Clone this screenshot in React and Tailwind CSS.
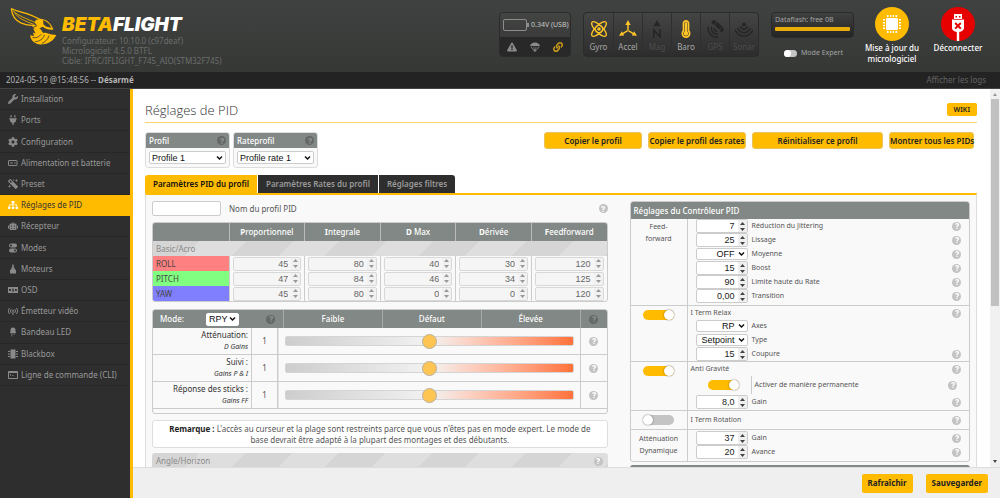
import clsx from 'clsx';
import {
  FaWrench,
  FaPlug,
  FaCog,
  FaMagic,
  FaSitemap,
  FaRobot,
  FaExclamationTriangle,
  FaLink,
  FaThermometerFull,
  FaQuestion,
} from 'react-icons/fa';

const svgProps = { viewBox: '0 0 20 20', fill: 'none', stroke: 'currentColor', strokeWidth: 2 };

const BatteryIcon = (props) => (
  <svg {...svgProps} {...props}>
    <rect x="1" y="5" width="17" height="10" rx="1" />
    <path d="M5 8l4 4M9 8l-4 4M12 10h4" strokeWidth="1.5" />
  </svg>
);

const PresetIcon = ({ className }) => <FaMagic className={clsx(className, '-scale-x-100')} />;

const ModesIcon = (props) => (
  <svg viewBox="0 0 20 20" fill="currentColor" {...props}>
    <path fillRule="evenodd" d="M6 1h8a4 4 0 010 8H6a4 4 0 010-8zm0 2a2 2 0 100 4 2 2 0 000-4z" />
    <path fillRule="evenodd" d="M6 11h8a4 4 0 010 8H6a4 4 0 010-8zm8 2a2 2 0 100 4 2 2 0 000-4z" />
  </svg>
);

const MotorIcon = (props) => (
  <svg viewBox="0 0 20 20" fill="currentColor" {...props}>
    <path d="M8.500 1h3v6h-3zM7 7h6v3l3 2v7H4v-7l3-2z" />
  </svg>
);

const OsdIcon = (props) => (
  <svg viewBox="0 0 20 20" fill="currentColor" {...props}>
    <path fillRule="evenodd" d="M0 4h20v12H0zM2 8v4h4V8zm1.500 1.300h1v1.400h-1zM8 7.500v3h2.500v1H8V13h4V9.500H9.500v-1H12v-1zm6 .5v4h2.500l1.500-1v-2l-1.500-1zm1.500 1.300h1v1.400h-1z" />
  </svg>
);

const AntennaIcon = (props) => (
  <svg {...svgProps} {...props}>
    <path d="M3 4a9 9 0 000 12M17 4a9 9 0 010 12M6.500 6.500a5 5 0 000 7M13.500 6.500a5 5 0 010 7M10 10v8" />
    <circle cx="10" cy="9" r="1" />
  </svg>
);

const LedIcon = (props) => (
  <svg viewBox="0 0 20 20" fill="currentColor" {...props}>
    <path d="M5 10V6a5 5 0 0110 0v4h1v2H4v-2zM7 12h1.500v7H7zM11.500 12H13v4h-1.500z" />
  </svg>
);

const ChipIcon = (props) => (
  <svg viewBox="0 0 20 20" fill="currentColor" {...props}>
    <path d="M5 1h10v18H5zM0 4h4v2H0zM0 9h4v2H0zM0 14h4v2H0zM16 4h4v2h-4zM16 9h4v2h-4zM16 14h4v2h-4z" />
  </svg>
);

const TerminalIcon = (props) => (
  <svg {...svgProps} {...props}>
    <path d="M1 3h18v14H1zM1 5h18" />
    <path d="M4 8l2 2-2 2M8 11h3" strokeWidth="1.500" />
  </svg>
);

const ParachuteIcon = (props) => (
  <svg viewBox="0 0 20 20" fill="currentColor" {...props}>
    <path d="M0 9a10 8 0 0120 0c-1-1.300-3-1.300-4 0-1-1.300-3-1.300-4 0-1-1.300-3-1.300-4 0-1-1.300-3-1.300-4 0-1-1.300-3-1.300-4 0z" />
    <path d="M1 10h2l5.500 6-1 1zM19 10h-2l-5.500 6 1 1zM7 10h1.500l1 6H8.700zM13 10h-1.500l-1 6h.800zM7.500 15h5v4h-5z" />
  </svg>
);

const GyroIcon = (props) => (
  <svg viewBox="0 0 24 24" fill="none" stroke="currentColor" strokeWidth="1.800" {...props}>
    <ellipse cx="12" cy="12" rx="13" ry="4.800" transform="rotate(45 12 12)" />
    <ellipse cx="12" cy="12" rx="13" ry="4.800" transform="rotate(-45 12 12)" />
    <circle cx="12" cy="12" r="5" strokeWidth="1.200" />
    <circle cx="12" cy="12" r="1.500" fill="currentColor" />
  </svg>
);

const AccelIcon = (props) => (
  <svg viewBox="0 0 24 24" fill="currentColor" {...props}>
    <path d="M11 5h2v9h-2zM11.500 13l1 1.800L4 20l-1-1.700zM12.500 13l-1 1.800L20 20l1-1.700z" />
    <path d="M12 0l3.500 6.500h-7zM0 21l3.800-6 3 5.800zM24 21l-3.800-6-3 5.800z" />
  </svg>
);

const MagIcon = (props) => (
  <svg viewBox="0 0 20 20" fill="none" stroke="currentColor" {...props}>
    <path d="M10 0l4 7H6z" fill="currentColor" stroke="none" />
    <path d="M6.500 20v-9l7 8v-9" strokeWidth="1.700" />
  </svg>
);

const GpsIcon = (props) => (
  <svg viewBox="0 0 24 24" fill="currentColor" {...props}>
    <path d="M11.500 6.500l4-4 6 6-4 4z" />
    <path d="M8 1l4-1 2 3-3.500 3.500L7 4zM19 12l3.500-3 1.500 4-2 3.500-3-1z" />
    <path d="M10 10a5 5 0 006 6z" />
    <path d="M7.500 9a8 8 0 008.500 10M3 9a12 12 0 0013 14" fill="none" stroke="currentColor" strokeWidth="2" />
  </svg>
);

const SonarIcon = (props) => (
  <svg viewBox="0 0 24 24" fill="none" stroke="currentColor" strokeWidth="2" {...props}>
    <path d="M0 13c5 11 19 11 24 0M3.500 10.500c4 8.500 13 8.500 17 0M7.500 8.500c2 5 7 5 9 0" />
    <circle cx="12" cy="6" r="1.600" fill="currentColor" />
  </svg>
);

const FirmwareIcon = (props) => (
  <svg viewBox="0 0 20 20" fill="#fff" {...props}>
    <rect x="4" y="4" width="12" height="12" rx="1" />
    <path d="M5 1h1.500v2H5zM8 1h1.500v2H8zM10.800 1h1.500v2h-1.500zM13.600 1h1.500v2h-1.500zM5 17h1.500v2H5zM8 17h1.500v2H8zM10.800 17h1.500v2h-1.500zM13.600 17h1.500v2h-1.500zM1 5h2v1.500H1zM1 8h2v1.500H1zM1 10.800h2v1.500H1zM1 13.600h2v1.500H1zM17 5h2v1.500h-2zM17 8h2v1.500h-2zM17 10.800h2v1.500h-2zM17 13.600h2v1.500h-2z" />
  </svg>
);

const UsbIcon = (props) => (
  <svg viewBox="0 0 14 28" {...props}>
    <path d="M3 1h8v5.500h2V15c0 2-2 3.500-4.800 4v9H5.800v-9C3 18.500 1 17 1 15V6.500h2z" fill="#fff" />
    <path d="M4.500 3h1.500v1.500H4.500zM8 3h1.500v1.500H8zM3 6h8v.800H3z" fill="#e60000" />
    <path d="M4.200 10l5.600 5.600M9.800 10l-5.600 5.600" stroke="#e60000" strokeWidth="2" />
  </svg>
);

const WaspLogo = () => (
  <svg viewBox="30 20 142 114" className="h-[38px] w-[47px] shrink-0" fill="none" stroke="#ffbb00">
    <path d="M34 24c20 12 56 12 90 36M34 24c2 20 10 36 30 44 14 6 28 8 42 7" strokeWidth="4" />
    <path d="M38 30c16 16 40 24 72 38M44 36c8 16 30 26 58 36" strokeWidth="2.500" />
    <path d="M122 55c18 2 34 14 39 33-14 1-24-2-32-9l-10 5 4 8-16-4-10-10 14-4c-6-3-7-9-3-15z" fill="#ffbb00" stroke="none" />
    <path d="M130 59c12 5 20 12 25 23-11 0-18-3-24-10z" fill="#3b3d3b" stroke="none" />
    <path d="M100 84l14 6 8-4 8 12c12-2 18 6 40 6-7 15-22 28-48 29-16-1-30-12-31-28l12 2-4-10 8 3z" fill="#ffbb00" stroke="none" />
    <path d="M98 112c12 2 20-2 26-10M106 124c14 0 24-8 28-20M126 130c10-4 18-12 22-24M112 76l-14 6" stroke="#3b3d3b" strokeWidth="2.500" />
  </svg>
);

const HelpIcon = ({ dark }) => (
  <span
    role="img"
    aria-label="Aide"
    className={clsx(
      'flex size-[9px] shrink-0 items-center justify-center rounded-full text-[6px]',
      dark ? 'bg-[#646866] text-[#8e9391]' : 'bg-[#c3c3c3] text-white'
    )}
  >
    <FaQuestion />
  </span>
);

const Chevron = ({ className }) => (
  <svg
    viewBox="0 0 8 6"
    aria-hidden="true"
    className={clsx('pointer-events-none absolute top-1/2 h-[5px] w-[7px] -translate-y-1/2', className)}
    fill="none"
    stroke="#111"
    strokeWidth="1.800"
  >
    <path d="M1 1.200l3 3 3-3" />
  </svg>
);

const SelectField = ({ value, label, id, className, selectClassName }) => (
  <div className={clsx('relative', className)}>
    <select
      id={id}
      aria-label={label}
      defaultValue={value}
      className={clsx(
        'block w-full appearance-none rounded-[2px] border border-[#ccc] bg-white font-[Liberation_Sans,sans-serif] text-[9px] leading-[10px] text-[#111]',
        selectClassName
      )}
    >
      <option>{value}</option>
    </select>
    <Chevron className="right-[3px]" />
  </div>
);

const NumberField = ({ value, label, id, muted, className }) => (
  <div
    className={clsx(
      'flex h-[14px] overflow-hidden rounded-[2px] border',
      muted ? 'border-[#d8d8d8] bg-[#f5f5f5]' : 'border-[#ccc] bg-white',
      className
    )}
  >
    <input
      id={id}
      type="text"
      inputMode="decimal"
      aria-label={label}
      defaultValue={value}
      className={clsx(
        'min-w-0 flex-1 pr-[3px] text-right font-[Liberation_Sans,sans-serif] text-[9px] leading-3 outline-none',
        muted ? 'text-[#666]' : 'text-[#222]'
      )}
    />
    <span className={clsx('flex w-[9px] items-center justify-center', muted ? 'bg-[#f1f1f1]' : 'bg-[#efefef]')}>
      <svg viewBox="0 0 5 9" className="h-[9px] w-[5px]" fill={muted ? '#999' : '#444'} aria-hidden="true">
        <path d="M0 3L2.500 0 5 3zM0 6l2.500 3L5 6z" />
      </svg>
    </span>
  </div>
);

const Toggle = ({ checked, label, small }) => (
  <input
    type="checkbox"
    role="switch"
    aria-label={label}
    defaultChecked={checked}
    className={clsx(
      'relative block shrink-0 appearance-none rounded-full bg-[#c4c4c4] before:absolute before:rounded-full before:bg-white checked:bg-[#ffbb00]',
      small
        ? 'h-[7px] w-[13px] before:inset-y-0 before:left-0 before:w-[7px]'
        : 'h-[10px] w-[31px] before:inset-y-0 before:left-0 before:w-[10px] before:shadow-[0_0_2px_rgba(0,0,0,0.5)] checked:before:left-auto checked:before:right-0'
    )}
  />
);

const menu = [
  { label: 'Installation', icon: FaWrench },
  { label: 'Ports', icon: FaPlug },
  { label: 'Configuration', icon: FaCog },
  { label: 'Alimentation et batterie', icon: BatteryIcon },
  { label: 'Preset', icon: PresetIcon },
  { label: 'Réglages de PID', icon: FaSitemap, active: true },
  { label: 'Récepteur', icon: FaRobot },
  { label: 'Modes', icon: ModesIcon },
  { label: 'Moteurs', icon: MotorIcon },
  { label: 'OSD', icon: OsdIcon },
  { label: 'Émetteur vidéo', icon: AntennaIcon },
  { label: 'Bandeau LED', icon: LedIcon },
  { label: 'Blackbox', icon: ChipIcon },
  { label: 'Ligne de commande (CLI)', icon: TerminalIcon },
];

const sensors = [
  { label: 'Gyro', icon: GyroIcon, on: true },
  { label: 'Accel', icon: AccelIcon, on: true },
  { label: 'Mag', icon: MagIcon },
  { label: 'Baro', icon: FaThermometerFull, on: true },
  { label: 'GPS', icon: GpsIcon },
  { label: 'Sonar', icon: SonarIcon },
];

const Header = () => (
  <header className="flex h-[72px] shrink-0 items-start bg-linear-to-b from-[#3f4240] to-[#363836] pl-[10px]">
    <div className="mt-[7px] flex">
      <WaspLogo />
      <div className="mt-2 ml-[5px] text-[8px] leading-[10px] text-[#6b6d6b]">
        <div className="mb-px font-[Inter,sans-serif] text-[19px] leading-5 font-black text-white italic">
          <span className="text-[#ffbb00]">BETA</span>FLIGHT
        </div>
        <p>Configurateur: 10.10.0 (c97deaf)</p>
        <p>Micrologiciel: 4.5.0 BTFL</p>
        <p>Cible: IFRC/IFLIGHT_F745_AIO(STM32F745)</p>
      </div>
    </div>

    <div className="mt-3 ml-auto h-[45px] w-[72px] overflow-hidden rounded border border-[#2b2b2b] bg-linear-to-b from-[#434543] to-[#333]">
      <div className="flex h-6 items-center pl-[3px] text-[7px] whitespace-nowrap text-[#c8c8c8]">
        <svg viewBox="0 0 26 12" className="mr-[2px] h-3 w-[26px] shrink-0" fill="none">
          <rect x="0.5" y="0.5" width="23" height="11" rx="1.500" stroke="#8c8c8c" />
          <path d="M24 4h2v4h-2z" fill="#8c8c8c" />
        </svg>
        0.34V (USB)
      </div>
      <div className="flex h-5 items-center justify-around bg-[#282828] text-[10px] text-[#8a8a8a]">
        <FaExclamationTriangle />
        <ParachuteIcon className="size-[10px]" />
        <FaLink className="text-[#c99a1c]" />
      </div>
    </div>

    <ul className="mt-3 ml-3 flex h-[45px] overflow-hidden rounded border border-[#2b2b2b] bg-linear-to-b from-[#434543] to-[#2d2d2d]">
      {sensors.map(({ label, icon: Icon, on }) => (
        <li
          key={label}
          className={clsx(
            'flex w-[29px] flex-col items-center justify-between border-l border-[#2f2f2f] pt-[7px] pb-[3px] text-[8px] leading-3 first:border-l-0',
            on ? 'text-[#a8a8a8]' : 'text-[#4d4d4d]'
          )}
        >
          <Icon className={clsx('size-[18px]', on ? 'text-[#ffc527]' : 'text-[#262626]')} />
          {label}
        </li>
      ))}
    </ul>

    <div className="mt-3 ml-3 flex w-[83px] flex-col">
      <div className="h-[26px] rounded border border-[#2a2a2a] bg-linear-to-b from-[#3f413f] to-[#242424] px-[3px] text-[7px] leading-[14px] text-[#a5a5a5]">
        Dataflash: free 0B
        <div className="h-1 rounded-[1px] bg-[#e8ac0b]" />
      </div>
      <label className="mt-[10px] ml-[13px] flex items-center gap-1 text-[7px] leading-[10px] text-[#a5a5a5]">
        <Toggle small label="Mode Expert" />
        Mode Expert
      </label>
    </div>

    <button className="mt-[7px] ml-1 flex w-[68px] flex-col items-center text-[8px] leading-[11px] font-medium text-white">
      <span className="mb-px flex size-[34px] items-center justify-center rounded-full bg-[#ffbb00]">
        <FirmwareIcon className="size-[20px]" />
      </span>
      Mise à jour du micrologiciel
    </button>
    <button className="mt-[7px] mr-[10px] flex w-16 flex-col items-center text-[8px] leading-[11px] font-medium text-white">
      <span className="mb-px flex size-[34px] items-end justify-center rounded-full bg-[#e60000]">
        <UsbIcon className="h-[28px] w-[14px]" />
      </span>
      Déconnecter
    </button>
  </header>
);

const Sidebar = () => (
  <nav className="w-[133px] shrink-0 border-r-[3px] border-[#ffbb00] bg-[#2e2e2e]">
    <ul className="grid h-[297px] auto-rows-fr">
      {menu.map(({ label, icon: Icon, active }) => (
        <li
          key={label}
          className={clsx('border-b', active ? 'border-[#ffbb00] bg-[#ffbb00]' : 'border-[#272727]')}
        >
          <a
            href="#"
            className={clsx(
              'flex h-full items-center gap-[3px] pl-2 text-[8px] whitespace-nowrap',
              active ? 'text-[#333]' : 'text-[#999]'
            )}
          >
            <Icon className={clsx('size-[10px] shrink-0', active ? 'text-white' : 'text-[#8a8a8a]')} />
            {label}
          </a>
        </li>
      ))}
    </ul>
  </nav>
);

const ProfileBox = ({ title, value, id }) => (
  <div className="w-[85px] rounded-[3px] border border-[#ddd] bg-[#f9f9f9]">
    <div className="flex h-[15px] items-center justify-between rounded-t-[2px] bg-[#828885] px-[3px] text-[8px] font-medium text-white">
      <label htmlFor={id}>{title}</label>
      <HelpIcon dark />
    </div>
    <SelectField id={id} value={value} className="m-[3px]" selectClassName="h-[13px] pl-[2px]" />
  </div>
);

const pidRows = [
  { axis: 'ROLL', color: 'bg-[#ff8080]', values: [45, 80, 40, 30, 120] },
  { axis: 'PITCH', color: 'bg-[#80ff80]', values: [47, 84, 46, 34, 125] },
  { axis: 'YAW', color: 'bg-[#8080ff]', values: [45, 80, 0, 0, 120] },
];
const pidColumns = ['Proportionnel', 'Integrale', 'D Max', 'Dérivée', 'Feedforward'];

const stripes = 'bg-[repeating-linear-gradient(135deg,#d5d5d5_0_33px,#dedede_33px_66px)]';

const PidTable = () => (
  <table className="w-full table-fixed border-separate border-spacing-0 overflow-hidden rounded-[3px] border border-[#ccc]">
    <thead>
      <tr className="h-[18px] bg-[#828885] text-[8px] leading-3 text-white">
        <th />
        {pidColumns.map((name) => (
          <th key={name} className="border-l border-[#bbb] font-medium">
            <b>{name[0]}</b>
            {name.slice(1)}
          </th>
        ))}
      </tr>
    </thead>
    <tbody>
      <tr className="h-[15px]">
        <td colSpan={6} className={clsx('pl-[3px] text-[8px] leading-3 text-[#8a8a8a]', stripes)}>
          Basic/Acro
        </td>
      </tr>
      {pidRows.map(({ axis, color, values }) => (
        <tr key={axis} className="h-[15px]">
          <th scope="row" className={clsx('pl-[3px] text-left text-[8px] leading-3 font-normal text-[#444]', color)}>
            {axis}
          </th>
          {values.map((value, i) => (
            <td key={pidColumns[i]} className="border-l border-[#ccc] px-[3px]">
              <NumberField muted value={value} label={`${axis} ${pidColumns[i]}`} />
            </td>
          ))}
        </tr>
      ))}
    </tbody>
  </table>
);

const sliders = [
  { name: 'Atténuation:', hint: 'D Gains' },
  { name: 'Suivi :', hint: 'Gains P & I' },
  { name: 'Réponse des sticks :', hint: 'Gains FF' },
];

const SliderPanel = () => (
  <section className="mt-[7px] rounded-[3px] border border-[#ccc] pb-1">
    <div className="flex h-[18px] items-stretch rounded-t-[2px] bg-[#828885] text-center text-[8px] leading-[18px] font-medium text-white">
      <div className="flex w-[130px] items-center pr-2 pl-[7px]">
        <label htmlFor="slider-mode">Mode:</label>
        <SelectField
          id="slider-mode"
          value="RPY"
          className="ml-[22px] w-[33px]"
          selectClassName="h-[13px] border-white pl-[2px]"
        />
        <span className="ml-auto">
          <HelpIcon dark />
        </span>
      </div>
      <div className="flex-1 border-l border-[#aaa]">Faible</div>
      <div className="flex-1 border-l border-[#aaa]">Défaut</div>
      <div className="flex-1 border-l border-[#aaa]">Élevée</div>
      <div className="flex w-[27px] items-center justify-center border-l border-[#aaa]">
        <HelpIcon dark />
      </div>
    </div>
    {sliders.map(({ name, hint }, i) => (
      <div key={name} className="flex h-[27px] border-b border-[#ccc] text-[#555]">
        <label htmlFor={`slider-${i}`} className="w-[98px] pt-px pr-[3px] text-right text-[8px] leading-3 text-[#333]">
          {name}
          <em className="block text-[7px]">{hint}</em>
        </label>
        <output className="flex w-[27px] items-center justify-center border-x border-[#ccc] text-[8px]">1</output>
        <div className="flex flex-1 items-center border-l border-[#e5e5e5] px-[6px]">
          <input
            id={`slider-${i}`}
            type="range"
            min="0"
            max="2"
            step="0.05"
            defaultValue="1"
            className="h-[10px] w-full appearance-none rounded-[2px] border border-[#d5d5d5] bg-linear-to-r from-[#cdcdcd] via-[#f2f2f2] to-[#ff7139] [&::-webkit-slider-thumb]:size-[15px] [&::-webkit-slider-thumb]:appearance-none [&::-webkit-slider-thumb]:rounded-full [&::-webkit-slider-thumb]:border [&::-webkit-slider-thumb]:border-[#b8b0a0] [&::-webkit-slider-thumb]:bg-[#ffc552]"
          />
        </div>
        <div className="flex w-[27px] items-center justify-center border-l border-[#ccc]">
          <HelpIcon />
        </div>
      </div>
    ))}
  </section>
);

const Option = ({ label, value, select, noHelp }) => {
  const id = `option-${label.replace(/\s/g, '-').toLowerCase()}-${String(value).replace(',', '-')}`;
  return (
    <div className="flex h-[14px] items-center pr-2 pl-2">
      {select ? (
        <SelectField id={id} value={value} className="w-[52px]" selectClassName="h-[12px] pr-3 text-right" />
      ) : (
        <NumberField id={id} value={value} className="w-[52px]" />
      )}
      <label htmlFor={id} className="ml-1 flex-1 text-[7px] leading-3">
        {label}
      </label>
      {!noHelp && <HelpIcon />}
    </div>
  );
};

const Group = ({ side, children, className }) => (
  <div className="flex border-b border-[#ccc] last:border-b-0">
    <div className="flex w-14 shrink-0 justify-center text-center text-[7px] leading-3">{side}</div>
    <div className={clsx('min-w-0 flex-1 border-l border-[#ccc]', className)}>{children}</div>
  </div>
);

const GroupTitle = ({ children }) => (
  <div className="flex h-3 items-center justify-between pr-2 pl-[3px] text-[7px] leading-3">
    {children}
    <HelpIcon />
  </div>
);

const ControllerPanel = () => (
  <section className="rounded-[3px] border border-[#ccc] text-[#555]">
    <h2 className="h-[17px] rounded-t-[2px] bg-[#828885] pl-[3px] text-[8px] leading-[17px] font-medium text-white">
      Réglages du Contrôleur PID
    </h2>
    <Group side={<span className="w-10 pt-[2px]">Feed-<br />forward</span>} className="pb-[2px]">
      <Option label="Réduction du Jittering" value="7" />
      <Option label="Lissage" value="25" />
      <Option label="Moyenne" value="OFF" select />
      <Option label="Boost" value="15" />
      <Option label="Limite haute du Rate" value="90" />
      <Option label="Transition" value="0,00" />
    </Group>
    <Group side={<span className="pt-1"><Toggle checked label="I Term Relax" /></span>} className="pt-px">
      <GroupTitle>I Term Relax</GroupTitle>
      <Option label="Axes" value="RP" select noHelp />
      <Option label="Type" value="Setpoint" select noHelp />
      <Option label="Coupure" value="15" />
    </Group>
    <Group side={<span className="pt-1"><Toggle checked label="Anti Gravité" /></span>} className="py-px">
      <GroupTitle>Anti Gravité</GroupTitle>
      <label className="flex h-5 items-center pr-3 pl-5 text-[7px]">
        <Toggle checked label="Activer de manière permanente" />
        <span className="ml-3 flex-1 border-l border-[#ccc] pl-[3px] leading-[18px]">Activer de manière permanente</span>
        <HelpIcon />
      </label>
      <Option label="Gain" value="8,0" />
    </Group>
    <Group side={<span className="pt-1"><Toggle label="I Term Rotation" /></span>} className="py-[3px]">
      <GroupTitle>I Term Rotation</GroupTitle>
    </Group>
    <Group side={<span className="pt-[3px]">Atténuation<br />Dynamique</span>} className="pt-px pb-[2px]">
      <Option label="Gain" value="37" />
      <Option label="Avance" value="20" />
    </Group>
  </section>
);

const actionButton =
  'h-[17px] rounded-[3px] border border-[#e8c25a] bg-[#ffbb00] text-[8px] leading-[15px] font-semibold whitespace-nowrap text-[#222]';

const tabs = ['Paramètres PID du profil', 'Paramètres Rates du profil', 'Réglages filtres'];

const Content = () => (
  <main className="min-w-0 flex-1 overflow-hidden bg-white pt-3 pr-[13px] pl-3">
    <div className="flex h-[22px] items-start justify-between border-b border-[#ffd56a]">
      <h1 className="font-['Open_Sans',sans-serif] text-[13px] leading-[18px] font-light text-[#333]">Réglages de PID</h1>
      <a href="#" className="mt-[2px] rounded-[2px] bg-[#ffbb00] px-[7px] text-[7px] leading-[13px] font-semibold text-[#222]">
        WIKI
      </a>
    </div>

    <div className="mt-[9px] flex items-start gap-[3px]">
      <ProfileBox id="profile" title="Profil" value="Profile 1" />
      <ProfileBox id="rate-profile" title="Rateprofil" value="Profile rate 1" />
      <div className="mr-[3px] ml-auto flex gap-[6px]">
        <button className={clsx(actionButton, 'w-[98px]')}>Copier le profil</button>
        <button className={clsx(actionButton, 'w-[98px]')}>Copier le profil des rates</button>
        <button className={clsx(actionButton, 'w-[131px]')}>Réinitialiser ce profil</button>
        <button className={clsx(actionButton, 'w-[85px]')}>Montrer tous les PIDs</button>
      </div>
    </div>

    <div role="tablist" className="mt-[7px] flex gap-px text-[8px] leading-[18px] font-semibold">
      {tabs.map((tab, i) => (
        <button
          key={tab}
          role="tab"
          aria-selected={i === 0}
          className={clsx(
            'h-[18px] px-2 first:rounded-tl-[3px] last:rounded-tr-[3px]',
            i === 0 ? 'bg-[#ffbb00] text-[#111]' : 'bg-[#2e2e2e] text-[#999]'
          )}
        >
          {tab}
        </button>
      ))}
    </div>

    <div className="grid h-[400px] grid-cols-[455fr_340fr] gap-[22px] border-x border-t-2 border-x-[#ddd] border-t-[#ffbb00] bg-[#f9f9f9] px-[6px] pt-[6px]">
      <div>
        <div className="mb-[6px] flex items-center text-[#555]">
          <input
            id="profile-name"
            type="text"
            className="h-[15px] w-[69px] rounded-[2px] border border-[#ccc] bg-white text-[8px]"
          />
          <label htmlFor="profile-name" className="ml-2 flex-1 text-[8px] leading-3">
            Nom du profil PID
          </label>
          <HelpIcon />
        </div>
        <PidTable />
        <SliderPanel />
        <p className="mt-[6px] rounded-[3px] border border-[#ddd] bg-white px-2 py-[2px] text-center text-[8px] leading-[11px] text-[#555]">
          <b className="text-[#222]">Remarque :</b> L'accès au curseur et la plage sont restreints parce que vous n'êtes
          pas en mode expert. Le mode de base devrait être adapté à la plupart des montages et des débutants.
        </p>
        <div
          className={clsx(
            'mt-[5px] flex h-[16px] items-center justify-between rounded-t-[3px] pr-[5px] pl-1 text-[8px] text-[#8a8a8a]',
            stripes
          )}
        >
          Angle/Horizon
          <HelpIcon />
        </div>
      </div>
      <div>
        <ControllerPanel />
        <div className="mt-[3px] h-[17px] rounded-t-[3px] bg-[#828885]" />
      </div>
    </div>
  </main>
);

const ScrollBar = () => (
  <div className="flex w-[10px] shrink-0 flex-col items-center bg-[#f1f1f1]" aria-hidden="true">
    <svg viewBox="0 0 10 10" className="size-[10px]" fill="#999">
      <path d="M3 7l2-3 2 3z" />
    </svg>
    <div className="h-[207px] w-2 bg-[#c1c1c1]" />
    <svg viewBox="0 0 10 10" className="mt-auto size-[10px]" fill="#444">
      <path d="M3 3l2 3 2-3z" />
    </svg>
  </div>
);

const App = () => (
  <div className="flex h-screen flex-col overflow-hidden font-['Noto_Sans','Open_Sans',sans-serif]">
    <Header />
    <div className="flex h-[17px] shrink-0 items-center justify-between border-b border-[#444] bg-[#232323] pr-[14px] pl-[6px] text-[8px] text-[#b5b5b5]">
      <span>
        2024-05-19 @15:48:56 -- <b>Désarmé</b>
      </span>
      <a href="#" className="text-[#636363]">
        Afficher les logs
      </a>
    </div>
    <div className="flex min-h-0 flex-1">
      <Sidebar />
      <div className="flex min-w-0 flex-1 flex-col">
        <div className="flex min-h-0 flex-1">
          <Content />
          <ScrollBar />
        </div>
        <footer className="flex h-[31px] shrink-0 items-center justify-end gap-[13px] border-t border-[#ddd] bg-[#efefef] pr-3">
          <button className="h-[19px] rounded-[2px] bg-[#ffbb00] px-[6px] text-[8px] font-bold text-[#222]">Rafraîchir</button>
          <button className="h-[19px] rounded-[2px] bg-[#ffbb00] px-[6px] text-[8px] font-bold text-[#222]">Sauvegarder</button>
        </footer>
      </div>
    </div>
  </div>
);

export default App;
